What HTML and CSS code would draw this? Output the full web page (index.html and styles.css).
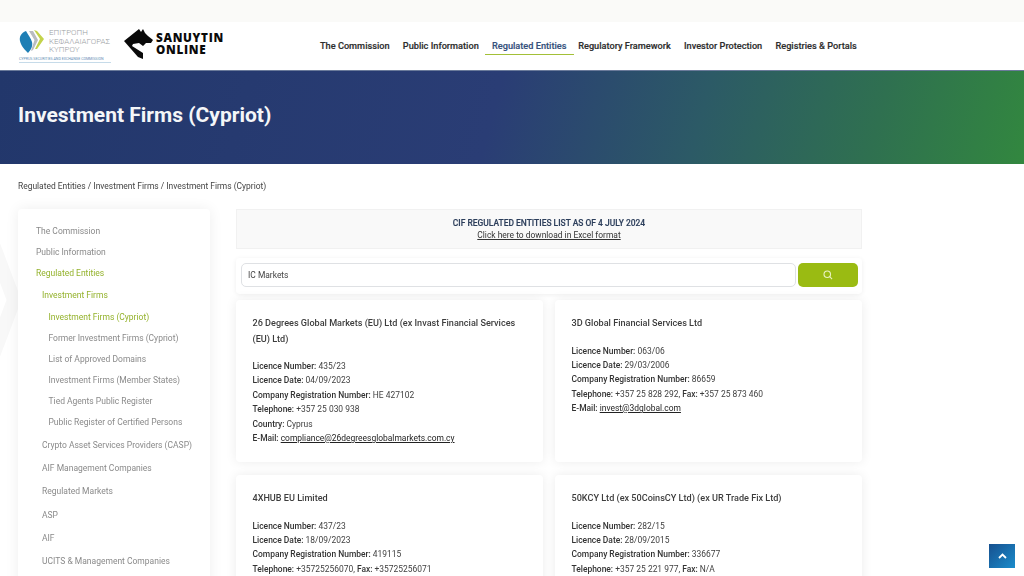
FILE: index.html
```html
<!DOCTYPE html>
<html lang="en">
<head>
<meta charset="utf-8">
<title>Investment Firms (Cypriot)</title>
<link rel="stylesheet" href="styles.css">
</head>
<body>
<div class="page">
  <svg class="bg-chevron" width="60" height="240" viewBox="0 0 60 240" fill="none" stroke="#f8f8f8" stroke-width="14"><path d="M-20 10 L14 100 L-20 190"/></svg>
  <div class="topstrip"></div>
  <header class="header">
    <div class="logos">
      <div class="cysec">
        <div class="cysec-main">
          <svg class="cysec-mark" width="25" height="24" viewBox="0 0 25 24">
            <path d="M7 1 C2 3 0 7 1 11 C2 16 6 20 9 23 C12 20 14 16 13 12 C12 8 9 5 7 1Z" fill="#1f7fb5"/>
            <path d="M10 1 L14 1 L19 10 L14 20 L12 21 L15.5 10Z" fill="#b9bcc0"/>
            <path d="M15 0 L18 1 L25 9 L18 19 L16 19 L21 9Z" fill="#c3d34a"/>
          </svg>
          <div class="cysec-name">ΕΠΙΤΡΟΠΗ<br>ΚΕΦΑΛΑΙΑΓΟΡΑΣ<br>ΚΥΠΡΟΥ</div>
        </div>
        <div class="cysec-sub">CYPRUS SECURITIES AND EXCHANGE COMMISSION</div>
      </div>
      <div class="sanuytin">
        <svg width="30" height="30" viewBox="0 0 30 30">
          <path d="M0 12 L15 0 L17 3 L19 0 L21 4 L24 7 L29 11 L27 14 L22 14 L19 17 L15 14 L9 15 L8 17 L19 24 L19 30 L14 28Z" fill="#0a0a0a"/>
        </svg>
        <div class="sanuytin-name">SANUYTIN<br>ONLINE</div>
      </div>
    </div>
    <nav class="nav">
      <a class="nav-item">The Commission</a>
      <a class="nav-item">Public Information</a>
      <a class="nav-item active">Regulated Entities</a>
      <a class="nav-item">Regulatory Framework</a>
      <a class="nav-item">Investor Protection</a>
      <a class="nav-item">Registries &amp; Portals</a>
    </nav>
  </header>
  <section class="hero"><h1>Investment Firms (Cypriot)</h1></section>
  <div class="crumbs">Regulated Entities / Investment Firms / Investment Firms (Cypriot)</div>
  <div class="content">
    <aside class="sidebar">
      <a class="lv1">The Commission</a>
      <a class="lv1">Public Information</a>
      <a class="lv1 on">Regulated Entities</a>
      <a class="lv2 on first">Investment Firms</a>
      <a class="lv3 on">Investment Firms (Cypriot)</a>
      <a class="lv3">Former Investment Firms (Cypriot)</a>
      <a class="lv3">List of Approved Domains</a>
      <a class="lv3">Investment Firms (Member States)</a>
      <a class="lv3">Tied Agents Public Register</a>
      <a class="lv3">Public Register of Certified Persons</a>
      <a class="lv2">Crypto Asset Services Providers (CASP)</a>
      <a class="lv2">AIF Management Companies</a>
      <a class="lv2">Regulated Markets</a>
      <a class="lv2">ASP</a>
      <a class="lv2">AIF</a>
      <a class="lv2">UCITS &amp; Management Companies</a>
    </aside>
    <main class="main">
      <div class="notice">
        <strong>CIF REGULATED ENTITIES LIST AS OF 4 JULY 2024</strong>
        <a>Click here to download in Excel format</a>
      </div>
      <div class="search">
        <div class="search-input">IC Markets</div>
        <div class="search-btn">
          <svg width="10" height="10" viewBox="0 0 11 11" fill="none" stroke="#e9f2bf" stroke-width="1.2"><circle cx="4.7" cy="4.7" r="3.6"/><path d="M7.4 7.4 L10 10"/></svg>
        </div>
      </div>
      <div class="cards">
        <article class="card">
          <h2>26 Degrees Global Markets (EU) Ltd (ex Invast Financial Services (EU) Ltd)</h2>
          <p><b>Licence Number:</b> 435/23</p>
          <p><b>Licence Date:</b> 04/09/2023</p>
          <p><b>Company Registration Number:</b> HE 427102</p>
          <p><b>Telephone:</b> +357 25 030 938</p>
          <p><b>Country:</b> Cyprus</p>
          <p><b>E-Mail:</b> <a>compliance@26degreesglobalmarkets.com.cy</a></p>
        </article>
        <article class="card">
          <h2>3D Global Financial Services Ltd</h2>
          <p><b>Licence Number:</b> 063/06</p>
          <p><b>Licence Date:</b> 29/03/2006</p>
          <p><b>Company Registration Number:</b> 86659</p>
          <p><b>Telephone:</b> +357 25 828 292, <b>Fax:</b> +357 25 873 460</p>
          <p><b>E-Mail:</b> <a>invest@3dglobal.com</a></p>
        </article>
        <article class="card">
          <h2>4XHUB EU Limited</h2>
          <p><b>Licence Number:</b> 437/23</p>
          <p><b>Licence Date:</b> 18/09/2023</p>
          <p><b>Company Registration Number:</b> 419115</p>
          <p><b>Telephone:</b> +35725256070, <b>Fax:</b> +35725256071</p>
        </article>
        <article class="card">
          <h2>50KCY Ltd (ex 50CoinsCY Ltd) (ex UR Trade Fix Ltd)</h2>
          <p><b>Licence Number:</b> 282/15</p>
          <p><b>Licence Date:</b> 28/09/2015</p>
          <p><b>Company Registration Number:</b> 336677</p>
          <p><b>Telephone:</b> +357 25 221 977, <b>Fax:</b> N/A</p>
        </article>
      </div>
    </main>
  </div>
  <a class="totop">
    <svg width="9" height="6" viewBox="0 0 9 6" fill="none" stroke="#fff" stroke-width="1.8"><path d="M1 5 L4.5 1.5 L8 5"/></svg>
  </a>
</div>
</body>
</html>
```
FILE: styles.css
```css
* { box-sizing: border-box; }
html, body { margin: 0; height: 576px; overflow: hidden; background: #fff; }
body { font-family: Roboto, "Liberation Sans", sans-serif; color: #3a3a3a; }
.page { position: relative; width: 1024px; height: 576px; overflow: hidden; filter: blur(.35px); }
.bg-chevron { position: absolute; left: 0; top: 200px; }
.topstrip { position: relative; height: 22px; background: #fafaf8; }
.header { position: relative; height: 48px; display: flex; align-items: center; padding-left: 19px; background: #fff; }
.logos { width: 301px; display: flex; align-items: center; gap: 13px; }
.cysec { width: 92px; }
.cysec-main { display: flex; align-items: center; gap: 5px; }
.cysec-mark { flex: none; }
.cysec-name { font-size: 8px; font-weight: 300; line-height: 8.8px; color: #9a9ea3; white-space: nowrap; }
.cysec-sub { font-size: 3.6px; line-height: 5px; margin-top: 2px; color: #5f8db5; border-bottom: 1px solid #c6dbe9; white-space: nowrap; }
.sanuytin { display: flex; align-items: center; gap: 2px; margin-top: -4px; }
.sanuytin-name { font-family: "Open Sans", sans-serif; font-weight: 800; font-size: 11.7px; line-height: 11.5px; letter-spacing: .7px; color: #0a0a0a; }
.nav { display: flex; gap: 13.2px; font-size: 9.2px; font-weight: 500; color: #2d2d2d; margin-top: 2px; }
.nav-item { padding: 0 0 3px; white-space: nowrap; -webkit-text-stroke: .15px #2d2d2d; }
.nav-item.active { color: #35507c; border-bottom: 1px solid #a3c037; padding: 0 7px 3px; margin: 0 -8.5px 0 -7px; -webkit-text-stroke: .15px #35507c; }
.hero { position: relative; height: 94px; display: flex; align-items: center; padding-left: 18px; background: linear-gradient(105deg, #22376b 0%, #2a3d75 48%, #2c5a66 68%, #2f7050 85%, #32873f 100%); border-top: 1px solid #6a7a9a; }
.hero h1 { margin: 0 0 6px; font-size: 21px; font-weight: 700; color: #f4f6f8; }
.crumbs { position: relative; height: 45px; padding: 16px 0 0 18px; font-size: 8.45px; line-height: 12px; color: #444; }
.content { position: relative; display: flex; align-items: flex-start; padding-left: 18px; gap: 26px; }
.sidebar { width: 192px; height: 400px; flex: none; display: flex; flex-direction: column; padding: 16px 0 0 18px; background: #fff; border-radius: 4px; box-shadow: 0 0 14px rgba(0,0,0,.07); font-size: 8.5px; color: #8a8a8a; }
.sidebar a { display: block; line-height: 12px; white-space: nowrap; }
.lv1 { padding-bottom: 9px; }
.lv2 { padding: 0 0 11.4px 6px; }
.lv2.first { padding-top: 1px; padding-bottom: 10px; }
.lv3 { padding: 0 0 9px 12.5px; }
.lv3:nth-child(10) { padding-bottom: 10.5px; }
.sidebar .on { color: #94b22c; }
.main { width: 626px; flex: none; }
.notice { height: 40px; display: flex; flex-direction: column; align-items: center; justify-content: center; background: #f9f9f9; border: 1px solid #f1f1f1; font-size: 8.45px; line-height: 12.5px; color: #2d3f5c; }
.notice strong { font-weight: 500; -webkit-text-stroke: .15px #2d3f5c; }
.notice a { color: #333; text-decoration: underline; }
.search { height: 36px; margin-top: 9px; padding: 5px 5px; display: flex; gap: 2px; border-radius: 4px; box-shadow: 0 1px 5px rgba(0,0,0,.07); background: #fff; }
.search-input { flex: 1; height: 24px; padding-left: 6px; font-size: 8.45px; line-height: 23px; color: #444; border: 1px solid #dfe1e4; border-radius: 5px; }
.search-btn { width: 60px; height: 24px; margin-right: -1px; display: flex; align-items: center; justify-content: center; background: #9abb12; border-radius: 5px; }
.cards { margin-top: 6px; display: grid; grid-template-columns: 307px 307px; column-gap: 12px; row-gap: 13px; grid-auto-rows: 162px; }
.card { padding: 16px 16px 0 16.5px; background: #fff; border-radius: 4px; box-shadow: 0 0 12px rgba(0,0,0,.08); }
.card h2 { margin: 0 0 12px; font-size: 9.1px; line-height: 15.5px; font-weight: 500; color: #3d3d3d; }
.card p { margin: 0; font-size: 8.45px; line-height: 14.4px; color: #3f3f3f; white-space: nowrap; }
.card b { font-weight: 500; color: #333; }
.card a { color: #222; text-decoration: underline; }
.totop { position: absolute; left: 989px; top: 544px; width: 26px; height: 24px; display: flex; align-items: center; justify-content: center; background: linear-gradient(135deg, #17508f, #1a8ccb); }
```
